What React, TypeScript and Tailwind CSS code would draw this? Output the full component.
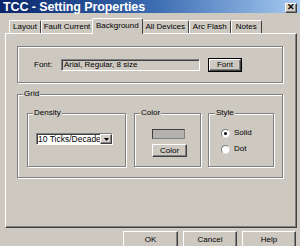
import React from "react";

const raised =
  "border border-t-white border-l-white border-r-[#404040] border-b-[#404040] shadow-[inset_-1px_-1px_0_#808080]";
const etched = "border border-[#808080] shadow-[1px_1px_0_#fff,inset_1px_1px_0_#fff]";

function Group({
  label,
  className,
  labelLeft,
  children,
}: {
  label: string;
  className: string;
  labelLeft: string;
  children?: React.ReactNode;
}) {
  return (
    <div className={`relative ${etched} ${className}`}>
      <span
        className={`absolute top-[-6px] ${labelLeft} bg-[#cdc9c1] px-[1px] text-[8px] leading-[10px]`}
      >
        {label}
      </span>
      {children}
    </div>
  );
}

function Tab({ label, w, selected }: { label: string; w: string; selected?: boolean }) {
  return (
    <div
      className={`${w} flex items-center justify-center border-t border-l border-t-white border-l-white border-r border-r-[#404040] rounded-t-[2px] text-[8px] ${
        selected
          ? "h-[16px] -mb-px relative z-10 bg-[#cdc9c1] -mx-[1px] w-auto px-[3px]"
          : "h-[13px]"
      }`}
    >
      <span className={selected ? "-mt-[2px]" : ""}>{label}</span>
    </div>
  );
}

function Radio({ label, checked }: { label: string; checked?: boolean }) {
  return (
    <div className="flex items-center gap-[4px] h-[10px]">
      <div className="w-[9px] h-[9px] rounded-full bg-white border border-t-[#808080] border-l-[#808080] border-b-[#e0e0e0] border-r-[#e0e0e0] flex items-center justify-center">
        {checked && <div className="w-[3px] h-[3px] rounded-full bg-black" />}
      </div>
      <span className="text-[8px] leading-[10px]">{label}</span>
    </div>
  );
}

export default function App() {
  return (
    <div
      className="w-[300px] h-[246px] overflow-hidden bg-[#cdc9c1] text-black flex flex-col"
      style={{ fontFamily: '"Liberation Sans", Arial, sans-serif' }}
    >
      {/* Title bar */}
      <div className="h-[13px] shrink-0 flex items-center justify-between bg-gradient-to-r from-[#0a246a] via-[#3a6ab0] to-[#a6caf0] pl-[3px] pr-[3px]">
        <span className="text-white font-bold text-[12.5px] leading-[13px] mt-[2px] tracking-[-0.1px]">
          TCC - Setting Properties
        </span>
        <div
          className={`w-[12px] h-[10px] mt-[2px] bg-[#d4d0c8] ${raised} flex items-center justify-center text-[9px] font-bold leading-none`}
        >
          ✕
        </div>
      </div>

      {/* Tabs */}
      <div className="h-[20px] shrink-0 flex items-end pl-[9px]">
        <Tab label="Layout" w="w-[32px]" />
        <Tab label="Fault Current" w="w-[52px]" />
        <Tab label="Background" w="w-[50px]" selected />
        <Tab label="All Devices" w="w-[47px]" />
        <Tab label="Arc Flash" w="w-[42px]" />
        <Tab label="Notes" w="w-[31px]" />
      </div>

      {/* Panel */}
      <div className="ml-[5px] w-[292px] h-[195px] shrink-0 border border-t-white border-l-white border-r-[#404040] border-b-[#404040] shadow-[inset_-1px_-1px_0_#808080] flex flex-col">
        {/* Font group */}
        <div className={`ml-[11px] mt-[12px] w-[266px] h-[37px] ${etched} flex items-center`}>
          <span className="ml-[16px] text-[8px] w-[27px]">Font:</span>
          <div className="w-[139px] h-[12px] border border-t-[#808080] border-l-[#808080] border-b-white border-r-white shadow-[inset_1px_1px_0_#404040] flex items-center pl-[2px]">
            <span className="text-[8px] leading-[10px]">Arial, Regular, 8 size</span>
          </div>
          <div className="ml-[8px] w-[34px] h-[14px] border border-black flex">
            <div className={`flex-1 ${raised} flex items-center justify-center text-[8px]`}>Font</div>
          </div>
        </div>

        {/* Grid group */}
        <Group label="Grid" labelLeft="left-[5px]" className="ml-[11px] mt-[11px] w-[266px] h-[84px]">
          <div className="flex pl-[9px] pt-[18px] gap-[7px]">
            <Group label="Density" labelLeft="left-[5px]" className="w-[99px] h-[54px]">
              <div className="ml-[8px] mt-[19px] w-[77px] h-[12px] bg-white border border-t-[#808080] border-l-[#808080] border-b-white border-r-white shadow-[inset_1px_1px_0_#404040] flex items-center">
                <span className="flex-1 overflow-hidden whitespace-nowrap text-[8.5px] leading-[10px] pl-[1px]">
                  10 Ticks/Decade
                </span>
                <div className={`w-[12px] h-[10px] bg-[#d4d0c8] ${raised} flex items-center justify-center`}>
                  <svg width="5" height="3" viewBox="0 0 5 3">
                    <path d="M0 0h5L2.5 3z" fill="#000" />
                  </svg>
                </div>
              </div>
            </Group>
            <Group label="Color" labelLeft="left-[5px]" className="w-[67px] h-[54px] ml-[1px]">
              <div className="ml-[17px] mt-[15px] w-[33px] h-[10px] bg-[#b4b2ae] border border-t-[#404040] border-l-[#404040] border-b-[#808080] border-r-[#808080]" />
              <div className={`ml-[17px] mt-[5px] w-[35px] h-[13px] ${raised} flex items-center justify-center text-[8px]`}>
                Color
              </div>
            </Group>
            <Group label="Style" labelLeft="left-[6px]" className="w-[66px] h-[54px]">
              <div className="ml-[12px] mt-[14px] flex flex-col gap-[6px]">
                <Radio label="Solid" checked />
                <Radio label="Dot" />
              </div>
            </Group>
          </div>
        </Group>
      </div>

      {/* Buttons */}
      <div className="flex justify-end gap-[5px] pr-[4px] mt-[3px]">
        <div className={`w-[55px] h-[17px] ${raised} flex items-center justify-center text-[8px]`}>OK</div>
        <div className={`w-[54px] h-[17px] ${raised} flex items-center justify-center text-[8px]`}>Cancel</div>
        <div className={`w-[54px] h-[17px] ${raised} flex items-center justify-center text-[8px]`}>Help</div>
      </div>
    </div>
  );
}
